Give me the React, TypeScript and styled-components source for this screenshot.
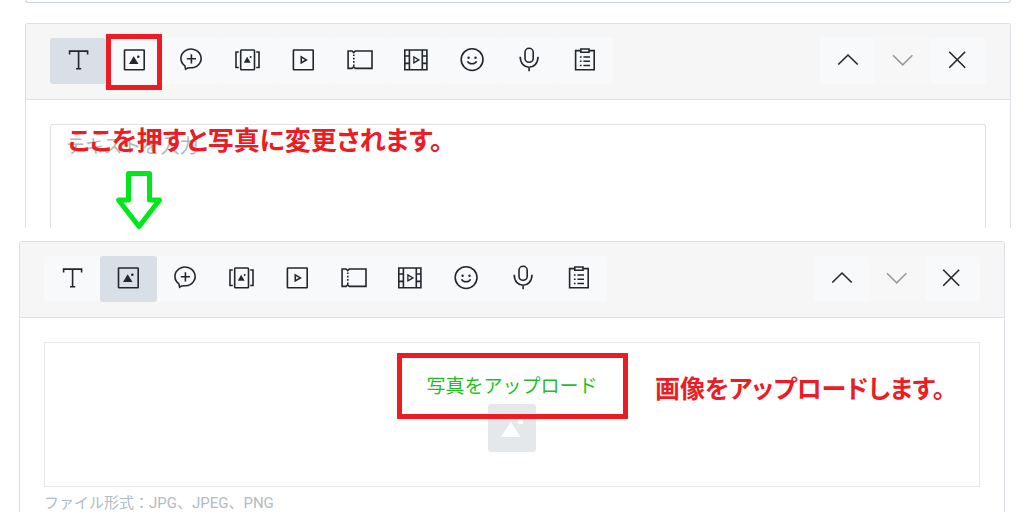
import React from "react";
import styled, { createGlobalStyle } from "styled-components";

const GlobalStyle = createGlobalStyle`
  *, *::before, *::after { box-sizing: border-box; }
  body {
    margin: 0;
    background: #fff;
    color: #23262b;
    font-family: Roboto, "Noto Sans CJK JP", sans-serif;
  }
`;

const Page = styled.main`
  display: flex;
  flex-direction: column;
  min-height: 100vh;
`;

const Shot = styled.section<{ $end?: boolean }>`
  position: relative;
  display: flex;
  flex-direction: column;
  padding: ${(p) => (p.$end ? "0 19px" : "0 13px 0 25px")};
  flex: ${(p) => (p.$end ? "1 0 auto" : "none")};
  margin-top: ${(p) => (p.$end ? "13px" : "0")};
`;

const PreviousCard = styled.div`
  height: 3px;
  margin-bottom: 20px;
  border: 1px solid #cdd5de;
  border-top: 0;
  border-radius: 0 0 3px 3px;
`;

const Card = styled.div`
  flex: 1 0 auto;
  border: 1px solid #dcdfe5;
  border-bottom: 0;
  border-radius: 3px 3px 0 0;
`;

const Toolbar = styled.div`
  display: flex;
  justify-content: space-between;
  padding: 14px 24px 15px;
  background: #f6f6f6;
  border-bottom: 1px solid #dfe1e5;
`;

const Group = styled.div<{ $width: number }>`
  display: flex;
  width: ${(p) => p.$width}px;
`;

const ToolButton = styled.button<{ $active?: boolean }>`
  position: relative;
  display: flex;
  flex: 1;
  align-items: center;
  justify-content: center;
  height: 46px;
  padding: 0;
  border: 0;
  border-radius: 3px;
  color: #23262b;
  background: ${(p) => (p.$active ? "#d9dfe6" : "#f7f9fb")};
  &:disabled {
    color: #97999c;
    background: #f7f7f7;
  }
`;

const Glyph = styled.svg`
  flex: none;
  width: 28px;
  height: 28px;
  fill: none;
  stroke: currentColor;
  stroke-width: 1.6;
  .solid { fill: currentColor; stroke: none; }
  .thin { stroke-width: 1.3; }
`;

const Highlight = styled.span`
  position: absolute;
  inset: -4px 1px -6px 0;
  border: 5px solid #ed1c24;
  pointer-events: none;
`;

const Content = styled.div`
  padding: 24px 24px 0;
`;

const TextBox = styled.textarea`
  display: block;
  width: 100%;
  height: 104px;
  padding: 8px 15px;
  border: 1px solid #dfe1e6;
  border-bottom: 0;
  border-radius: 3px 3px 0 0;
  outline: 0;
  resize: none;
  font: 19px/24px "Noto Sans CJK JP", sans-serif;
  &::placeholder { color: #b0b8c0; opacity: 1; }
`;

const UploadBox = styled.div`
  position: relative;
  display: flex;
  flex-direction: column;
  align-items: center;
  height: 145px;
  padding-top: 28px;
  border: 1px solid #e6e7ea;
`;

const UploadLink = styled.a`
  margin-bottom: 5px;
  color: #1fbf1f;
  font: 19px/28px "Noto Sans CJK JP", sans-serif;
  text-decoration: none;
`;

const UploadMark = styled.span`
  position: absolute;
  top: 10px;
  left: 50%;
  width: 231px;
  height: 66px;
  margin-left: -115px;
  border: 5px solid #ed1c24;
  pointer-events: none;
`;

const Thumb = styled.svg`
  width: 48px;
  height: 48px;
`;

const Hint = styled.p`
  margin: 7px 0 0;
  color: #b3bbc3;
  font-size: 15px;
  line-height: 18px;
`;

const Note = styled.p<{ $x: number; $y: number; $size: number }>`
  position: absolute;
  left: ${(p) => p.$x}px;
  top: ${(p) => p.$y}px;
  margin: 0;
  color: #ed1c24;
  font: 700 ${(p) => p.$size}px/36px "Noto Sans CJK JP", sans-serif;
  font-feature-settings: "palt";
  white-space: nowrap;
  pointer-events: none;
`;

const Arrow = styled.svg`
  position: absolute;
  left: 114px;
  top: 168px;
  width: 50px;
  height: 64px;
  z-index: 1;
  fill: #fff;
  stroke: #00e819;
  stroke-width: 5;
  stroke-linejoin: round;
  pointer-events: none;
`;

const tools: { id: string; label: string; art: React.ReactNode }[] = [
  { id: "text", label: "テキスト", art: <path d="M5.6 7.4V4.1h18v3.3M14.6 4.1v17.6M12 21.7h5.2" /> },
  {
    id: "photo",
    label: "写真",
    art: (
      <>
        <rect x="4.5" y="3" width="19.7" height="19.7" rx=".5" />
        <path className="solid" d="M9 17l4.7-7.8 4.8 7.8z" />
        <circle className="solid" cx="18.3" cy="9.7" r="1.3" />
      </>
    ),
  },
  {
    id: "coupon",
    label: "クーポン",
    art: <path d="M7.9 18.9A10.1 9.4 0 1 1 14.6 20.8C12.4 20.8 10.6 20.6 8.6 22.1ZM14.4 7.2v9.2M9.8 11.8H19" />,
  },
  {
    id: "rich-message",
    label: "リッチメッセージ",
    art: (
      <>
        <rect x="7.7" y="3" width="13.8" height="19.7" rx=".8" />
        <path d="M5.8 5H3v15.5h2.8M23.2 5H26v15.5h-2.8" />
        <path className="solid" d="M10.8 15.8l3.3-6 3.6 6z" />
        <circle className="solid" cx="17.6" cy="10" r="1" />
      </>
    ),
  },
  {
    id: "video",
    label: "動画",
    art: (
      <>
        <rect x="4.4" y="3" width="19.8" height="19.7" rx=".5" />
        <path d="M12.3 9.9v6l5-3z" />
      </>
    ),
  },
  {
    id: "ticket",
    label: "チケット",
    art: (
      <>
        <path d="M2.1 4h4l1.6 1.6L9.3 4H26v17.4H9.3l-1.6-1.6-1.6 1.6h-4z" />
        <path d="M7.8 7.5V19" strokeDasharray="1.6 1.7" />
      </>
    ),
  },
  {
    id: "rich-video",
    label: "リッチビデオ",
    art: (
      <>
        <path d="M2.8 3h22.1v19.7H2.8zM7.4 3v19.7M20.3 3v19.7M2.8 9h4.6M2.8 16.4h4.6M20.3 9h4.6M20.3 16.4h4.6" />
        <path className="thin" d="M11.9 9.9v6l5-3z" />
      </>
    ),
  },
  {
    id: "sticker",
    label: "スタンプ",
    art: (
      <>
        <circle cx="14.1" cy="12.6" r="10.9" />
        <circle className="solid" cx="10.6" cy="10.8" r="1.2" />
        <circle className="solid" cx="17.5" cy="10.8" r="1.2" />
        <path d="M9.6 14.2c1.2 3.4 7.7 3.4 8.9 0" />
      </>
    ),
  },
  {
    id: "voice",
    label: "ボイス",
    art: (
      <>
        <rect x="10" y="1.3" width="8.2" height="14" rx="4.1" />
        <path d="M5.2 9.7c0 14 17.8 14 17.8 0M14.1 20.3v4" />
      </>
    ),
  },
  {
    id: "survey",
    label: "リサーチ",
    art: (
      <>
        <path d="M9.8 3.6H4.6v19.2h18.6V3.6H18M9.8 2h8.2v3.2H9.8z" />
        <path d="M12.4 10H19M12.4 14.2H19M12.4 18.5H19M8.9 10h1.7M8.9 14.2h1.7M8.9 18.5h1.7" />
      </>
    ),
  },
];

function Icon({ children }: { children: React.ReactNode }) {
  return (
    <Glyph viewBox="0 0 28 28" aria-hidden="true">
      {children}
    </Glyph>
  );
}

function EditorToolbar({ active, highlight }: { active: string; highlight?: string }) {
  return (
    <Toolbar>
      <Group $width={563}>
        {tools.map((t) => (
          <ToolButton key={t.id} type="button" aria-label={t.label} $active={t.id === active}>
            <Icon>{t.art}</Icon>
            {t.id === highlight && <Highlight />}
          </ToolButton>
        ))}
      </Group>
      <Group $width={166}>
        <ToolButton type="button" aria-label="上へ">
          <Icon>
            <path d="M4.3 17.5L14 8l9.7 9.5" />
          </Icon>
        </ToolButton>
        <ToolButton type="button" aria-label="下へ" disabled>
          <Icon>
            <path d="M4 8.2l9.7 9.6 9.7-9.6" />
          </Icon>
        </ToolButton>
        <ToolButton type="button" aria-label="閉じる">
          <Icon>
            <path d="M5.2 4.8l16 16M21.2 4.8l-16 16" />
          </Icon>
        </ToolButton>
      </Group>
    </Toolbar>
  );
}

export default function App() {
  return (
    <Page>
      <GlobalStyle />
      <Shot>
        <PreviousCard />
        <Card>
          <EditorToolbar active="text" highlight="photo" />
          <Content>
            <TextBox aria-label="テキスト" placeholder="テキストを入力" />
          </Content>
        </Card>
        <Note $x={68} $y={121} $size={26}>
          ここを押すと写真に変更されます。
        </Note>
        <Arrow viewBox="0 0 50 64" aria-hidden="true">
          <path d="M14.5 5.5h21v26.5h10L25 58.5 4.5 32h10z" />
        </Arrow>
      </Shot>
      <Shot $end>
        <Card>
          <EditorToolbar active="photo" />
          <Content>
            <UploadBox>
              <UploadLink href="#upload">写真をアップロード</UploadLink>
              <Thumb viewBox="0 0 48 48" aria-hidden="true">
                <rect width="48" height="48" rx="3" fill="#e4e8eb" />
                <path d="M13 33l9.8-15L32.5 33z" fill="#fff" />
                <circle cx="32.5" cy="17.5" r="2.8" fill="#fff" />
              </Thumb>
              <UploadMark />
            </UploadBox>
            <Hint>ファイル形式：JPG、JPEG、PNG</Hint>
          </Content>
        </Card>
        <Note $x={655} $y={128} $size={25}>
          画像をアップロードします。
        </Note>
      </Shot>
    </Page>
  );
}
